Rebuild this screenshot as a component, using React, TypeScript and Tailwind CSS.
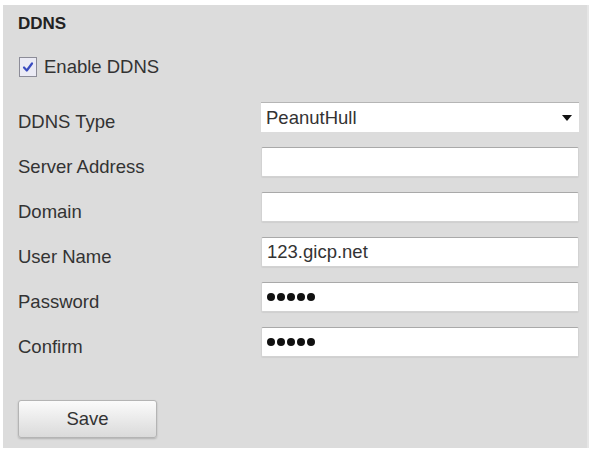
import React from "react";

const font = { fontFamily: '"Liberation Sans", Arial, sans-serif' };

function Field({ children }: { children?: React.ReactNode }) {
  return (
    <div className="flex h-[30px] w-[318px] items-center rounded-[2px] border border-[#d2d2d2] border-t-[#a9a9a9] bg-white pl-[5px] text-[18.5px] text-[#333] shadow-[0_1px_1px_rgba(0,0,0,0.06)]">
      {children}
    </div>
  );
}

function Dots() {
  return (
    <div className="flex items-center gap-[2px]">
      {[0, 1, 2, 3, 4].map((i) => (
        <span key={i} className="block h-[8px] w-[8px] rounded-full bg-[#111]" />
      ))}
    </div>
  );
}

const rows: { label: string; content: React.ReactNode; select?: boolean }[] = [
  { label: "DDNS Type", content: "PeanutHull", select: true },
  { label: "Server Address", content: null },
  { label: "Domain", content: null },
  { label: "User Name", content: "123.gicp.net" },
  { label: "Password", content: <Dots /> },
  { label: "Confirm", content: <Dots /> },
];

export default function App() {
  return (
    <div className="h-[451px] w-[592px] bg-white pl-[3px] pr-[3px] pt-[5px]" style={font}>
      <div className="h-[443px] w-full border-r-2 border-[#e6e6e6] bg-[#dcdcdc] pl-[15px] pt-[9px]">
        <div className="text-[17px] font-bold leading-[20px] text-[#222]">DDNS</div>
        <div className="mt-[22px] flex items-center">
          <div className="ml-[1px] flex h-[20px] w-[18px] items-center justify-center border border-[#8c8c98] bg-[#ebebf5]">
            <svg width="12" height="12" viewBox="0 0 12 12">
              <path d="M2 6.5 L4.8 9.5 L10 2.5" fill="none" stroke="#3a4cc0" strokeWidth="2.2" strokeLinecap="round" strokeLinejoin="round" />
            </svg>
          </div>
          <span className="ml-[7px] text-[18.5px] leading-[22px] text-[#333]">Enable DDNS</span>
        </div>
        <div className="mt-[24px] flex flex-col gap-[15px]">
          {rows.map((r) => (
            <div key={r.label} className="flex h-[30px] items-center">
              <div className="w-[243px] pt-[9px] text-[18.5px] leading-[22px] text-[#333]">{r.label}</div>
              {r.select ? (
                <div className="flex h-[30px] w-[318px] items-center justify-between border-t border-[#b5b5b5] bg-white pl-[5px] pr-[7px] text-[18.5px] text-[#333]">
                  <span>{r.content}</span>
                  <svg width="10" height="6" viewBox="0 0 10 6">
                    <path d="M0 0 H10 L5 6 Z" fill="#111" />
                  </svg>
                </div>
              ) : (
                <Field>{r.content}</Field>
              )}
            </div>
          ))}
        </div>
        <button className="mt-[43px] flex h-[38px] w-[139px] items-center justify-center rounded-[3px] border border-[#b4b4b4] bg-gradient-to-b from-[#fbfbfb] to-[#dadada] text-[18.5px] text-[#333] shadow-[0_1px_2px_rgba(0,0,0,0.2)]">
          Save
        </button>
      </div>
    </div>
  );
}
